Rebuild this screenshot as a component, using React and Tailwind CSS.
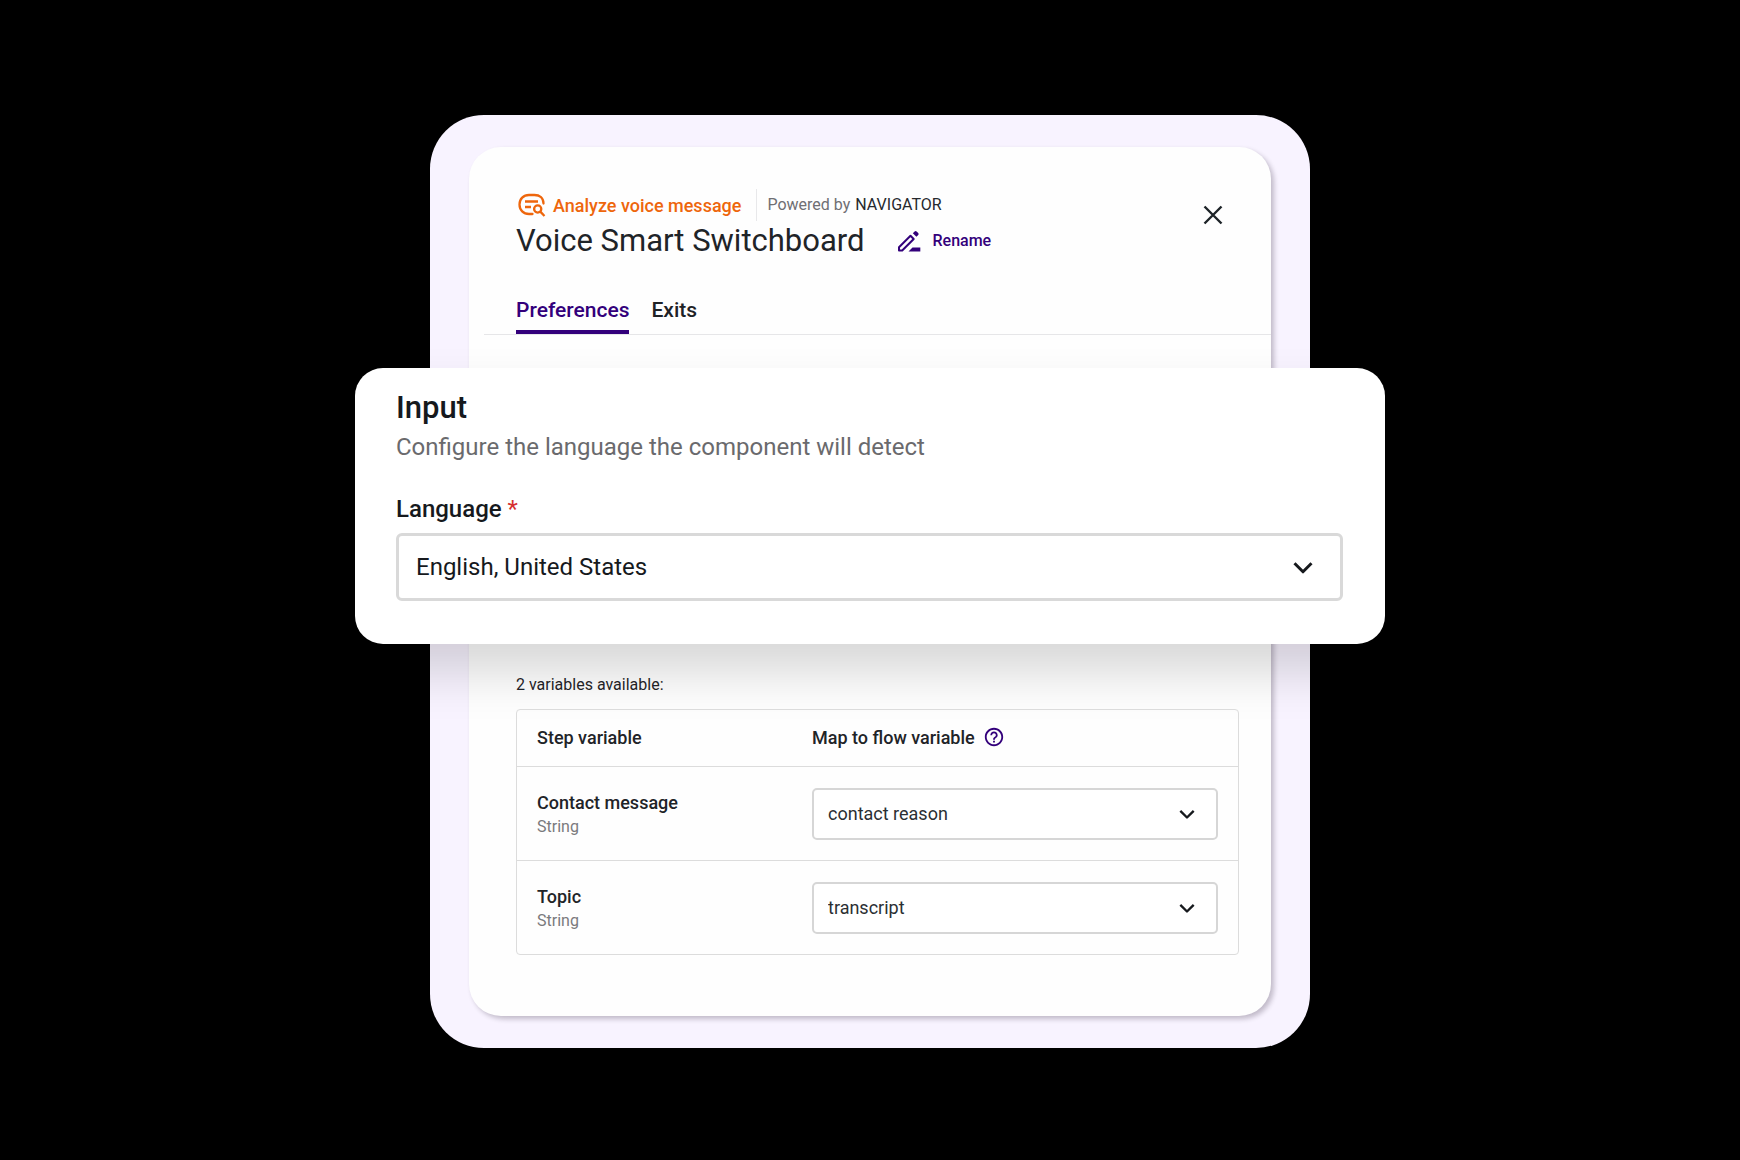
import React from "react";
import { MdHelpOutline } from "react-icons/md";

function AnalyzeIcon() {
  return (
    <svg className="h-[26px] w-[30px] shrink-0" viewBox="0 0 30 26" fill="none" stroke="#ee660c" strokeWidth="2.3" aria-hidden="true">
      <path d="M27.500 11.500C27.500 6 23.500 3 18.500 3H13C7.500 3 3.500 7 3.500 12.500S7.500 22 13 22H16.500" strokeLinecap="round" />
      <path d="M9 9.500H22M9 15H15" />
      <circle cx="21.700" cy="17" r="3.600" />
      <path d="M24.300 19.600L28.500 24" />
    </svg>
  );
}

function RenameIcon() {
  return (
    <svg className="h-6 w-6 shrink-0" viewBox="0 0 24 24" aria-hidden="true">
      <path d="M2 18.300L13.500 6.800L16.700 10L5.200 21.500H2Z" fill="none" stroke="#33007b" strokeWidth="2" strokeLinejoin="round" />
      <path d="M15.800 4.200L17.600 2.400Q18.600 1.500 19.600 2.400L21.200 4Q22.200 5 21.200 6L19.400 7.800Z" fill="#33007b" />
      <path d="M11.500 22.400L15.500 18.500H23.300V22.400Z" fill="#33007b" />
    </svg>
  );
}

function CloseIcon() {
  return (
    <svg className="size-5" viewBox="0 0 20 20" fill="none" stroke="#1d2327" strokeWidth="2.400" aria-hidden="true">
      <path d="M1.500 1.500L18.500 18.500M18.500 1.500L1.500 18.500" />
    </svg>
  );
}

function Chevron({ className }) {
  return (
    <svg className={className} viewBox="0 0 20 14" fill="none" stroke="#16191d" strokeWidth="3" strokeLinejoin="round" aria-hidden="true">
      <path d="M1.500 2.300L10 10.800L18.500 2.300" />
    </svg>
  );
}

const rows = [
  { id: "contact-message", name: "Contact message", type: "String", value: "contact reason" },
  { id: "topic", name: "Topic", type: "String", value: "transcript" },
];

function Header() {
  return (
    <header className="flex items-start justify-between pr-[42px] pl-[47px]">
      <div>
        <div className="flex h-8 items-center">
          <AnalyzeIcon />
          <span className="ml-[7px] text-[18px] font-medium text-[#ee660c]">Analyze voice message</span>
          <span className="ml-[15px] h-full w-px bg-[#e8e8ea]" />
          <span className="ml-[10px] text-[16px] text-[#6f6f73]">Powered by</span>
          <span className="ml-[5px] text-[16px] text-[#26292d]">NAVIGATOR</span>
        </div>
        <div className="flex h-10 items-center">
          <h1 className="text-[31px] leading-10 text-[#1f2428]">Voice Smart Switchboard</h1>
          <button type="button" className="ml-8 flex items-center gap-3 text-[16px] font-medium text-[#33007b]">
            <RenameIcon />
            Rename
          </button>
        </div>
      </div>
      <button type="button" aria-label="Close" className="mt-[10px] flex size-8 items-center justify-center">
        <CloseIcon />
      </button>
    </header>
  );
}

function Tabs() {
  return (
    <nav className="mt-[37px] ml-[15px] flex gap-[22px] border-b border-[#e6e6e8] pl-8 text-[21px] leading-6 font-medium">
      <button type="button" className="border-b-4 border-[#33007b] pb-2 text-[#33007b]">Preferences</button>
      <button type="button" className="border-b-4 border-transparent pb-2 text-[#1f2226]">Exits</button>
    </nav>
  );
}

function InputPanel() {
  return (
    <section className="-mx-[114px] mt-[33px] rounded-[28px] bg-white pt-[22px] pr-[42px] pb-[43px] pl-[41px] shadow-[0_28px_50px_rgba(0,0,0,0.155)]">
      <h2 className="text-[31px] leading-9 font-medium text-[#16191d]">Input</h2>
      <p className="mt-[5px] text-[24px] leading-8 text-[#6a6a6d]">Configure the language the component will detect</p>
      <label htmlFor="language" className="mt-[30px] block text-[24px] leading-8 font-medium text-[#16191d]">
        Language <span className="font-normal text-[#d62f2f]">*</span>
      </label>
      <div className="relative mt-2">
        <select id="language" className="block h-[68px] w-full appearance-none rounded-[6px] border-[3px] border-[#d9d9d9] bg-white px-[17px] text-[24px] text-[#16191d]">
          <option>English, United States</option>
        </select>
        <Chevron className="pointer-events-none absolute top-[28px] right-[30px] h-[14px] w-5" />
      </div>
    </section>
  );
}

function Variables() {
  return (
    <section className="pt-[29px] pr-8 pb-[61px] pl-[47px]">
      <p className="text-[16px] leading-6 text-[#1f2226]">2 variables available:</p>
      <table className="mt-3 w-full table-fixed border-separate border-spacing-0 rounded-[4px] border border-[#dcdcdc] text-left text-[18px] text-[#1f2428]">
        <thead>
          <tr className="h-[57px]">
            <th scope="col" className="w-[295px] border-b border-[#dcdcdc] pb-[2px] pl-5 font-medium">Step variable</th>
            <th scope="col" className="border-b border-[#dcdcdc] pb-[2px] font-medium">
              <span className="flex items-center gap-2">
                Map to flow variable
                <MdHelpOutline className="size-[22px] text-[#33007b]" />
              </span>
            </th>
          </tr>
        </thead>
        <tbody>
          {rows.map((row) => (
            <tr key={row.id} className="group h-[94px] last:h-[93px]">
              <td className="border-b border-[#dcdcdc] pt-[3px] pl-5 group-last:border-b-0">
                <label htmlFor={row.id} className="block leading-6 font-medium">{row.name}</label>
                <span className="block text-[16px] leading-6 text-[#7a7a7d]">{row.type}</span>
              </td>
              <td className="border-b border-[#dcdcdc] pr-5 group-last:border-b-0">
                <div className="relative">
                  <select id={row.id} className="block h-[52px] w-full appearance-none rounded-[5px] border-2 border-[#d6d6d6] bg-white px-[14px] text-[18px] text-[#2b2f33]">
                    <option>{row.value}</option>
                  </select>
                  <Chevron className="pointer-events-none absolute top-[21px] right-[23px] h-[11px] w-4" />
                </div>
              </td>
            </tr>
          ))}
        </tbody>
      </table>
    </section>
  );
}

export default function App() {
  return (
    <main className="min-h-screen bg-black px-20 pt-[115px] pb-20 font-[Roboto,sans-serif]">
      <div className="mx-auto w-full max-w-[880px] rounded-[54px] bg-[#f8f3ff] px-[39px] py-8">
        <div className="rounded-[32px] bg-[#fefefe] pt-[42px] shadow-[3px_3px_5px_rgba(20,10,30,0.24)]">
          <Header />
          <Tabs />
          <InputPanel />
          <Variables />
        </div>
      </div>
    </main>
  );
}
